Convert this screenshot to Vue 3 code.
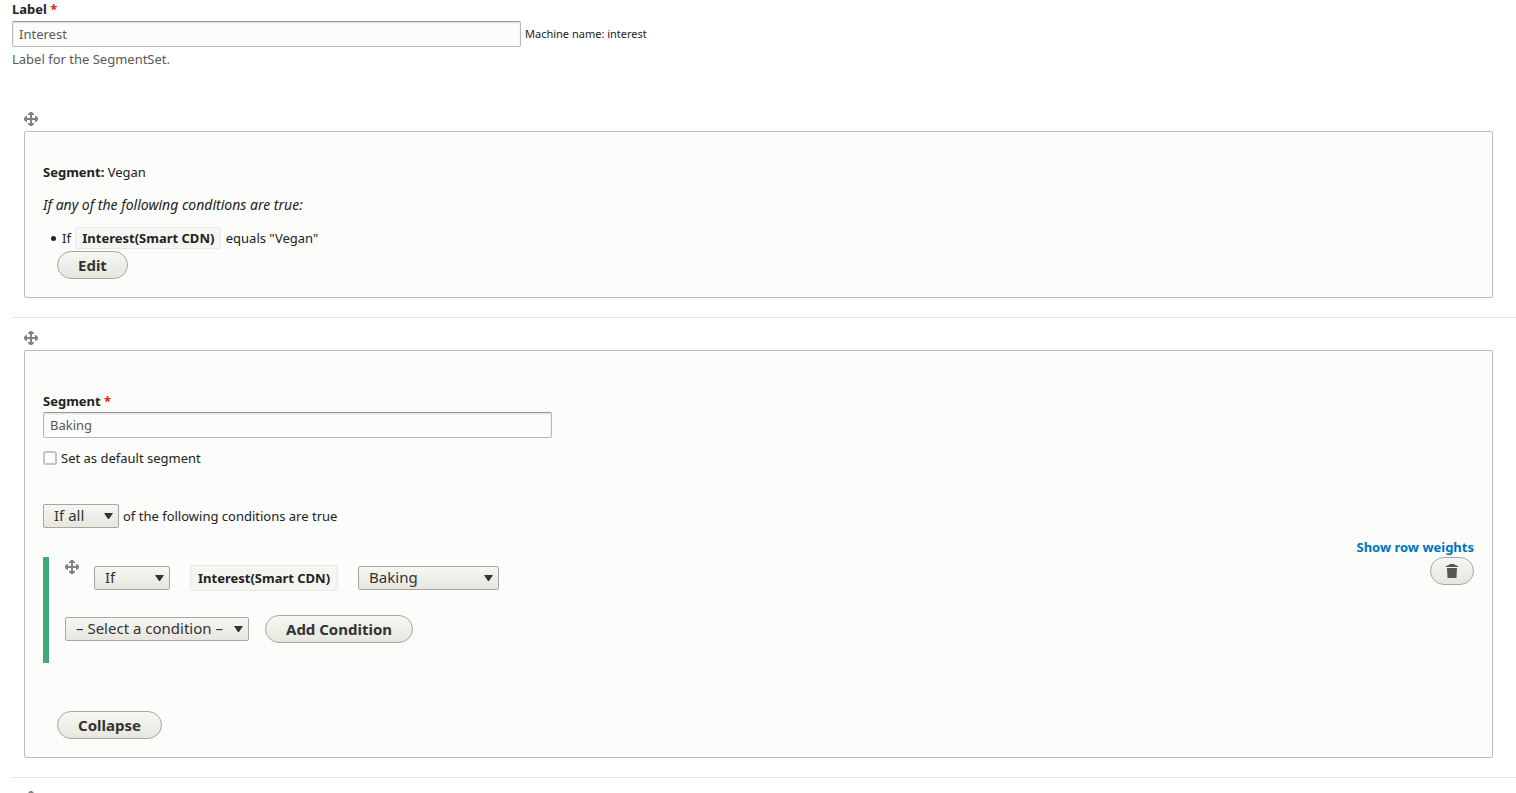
<script setup>
import { ref } from 'vue'

const label = ref('Interest')
const segmentName = ref('Baking')
const isDefault = ref(false)
const matchMode = ref('all')
const negate = ref('if')
const interest = ref('Baking')
const newCondition = ref('')

const segments = [
  { id: 1, name: 'Vegan', mode: 'view' },
  { id: 2, name: 'Baking', mode: 'edit' },
  { id: 3, name: '', mode: 'empty' }
]
</script>

<template>
  <form class="segment-set" @submit.prevent>
    <div class="form-item">
      <label class="form-label" for="set-label">Label <span class="required">*</span></label>
      <div class="label-row">
        <input id="set-label" v-model="label" class="form-text" type="text">
        <small class="machine-name">Machine name: interest</small>
      </div>
      <div class="description">Label for the SegmentSet.</div>
    </div>

    <div class="segments">
      <section v-for="segment in segments" :key="segment.id" class="segment-row">
        <a href="#" class="handle" aria-label="Drag to re-order" @click.prevent>
          <svg width="14" height="14" viewBox="0 0 14 14">
            <path d="M6 0H8L10 2V3H8V6H11V4H12L14 6V8L12 10H11V8H8V11H10V12L8 14H6L4 12V11H6V8H3V10H2L0 8V6L2 4H3V6H6V3H4V2Z" />
          </svg>
        </a>

        <div v-if="segment.mode === 'view'" class="panel">
          <p><strong>Segment:</strong> {{ segment.name }}</p>
          <p><em>If any of the following conditions are true:</em></p>
          <ul class="summary">
            <li>If <span class="tag">Interest(Smart CDN)</span> equals "{{ segment.name }}"</li>
          </ul>
          <button type="button" class="button">Edit</button>
        </div>

        <div v-else-if="segment.mode === 'edit'" class="panel">
          <div class="segment-name">
            <label class="form-label" for="segment-name">Segment <span class="required">*</span></label>
            <input id="segment-name" v-model="segmentName" class="form-text" type="text">
          </div>
          <div class="checkbox-item">
            <input id="default-segment" v-model="isDefault" type="checkbox">
            <label for="default-segment">Set as default segment</label>
          </div>
          <div class="match">
            <select id="match-mode" v-model="matchMode" class="select short">
              <option value="all">If all</option>
              <option value="any">If any</option>
            </select>
            <label for="match-mode">of the following conditions are true</label>
          </div>
          <div class="weights"><a href="#" @click.prevent>Show row weights</a></div>

          <div class="conditions">
            <div class="condition">
              <a href="#" class="handle" aria-label="Drag to re-order" @click.prevent>
                <svg width="14" height="14" viewBox="0 0 14 14">
                  <path d="M6 0H8L10 2V3H8V6H11V4H12L14 6V8L12 10H11V8H8V11H10V12L8 14H6L4 12V11H6V8H3V10H2L0 8V6L2 4H3V6H6V3H4V2Z" />
                </svg>
              </a>
              <div class="condition-fields">
                <select v-model="negate" class="select short" aria-label="Negate">
                  <option value="if">If</option>
                  <option value="not">If not</option>
                </select>
                <span class="tag large">Interest(Smart CDN)</span>
                <select v-model="interest" class="select medium" aria-label="Interest">
                  <option>Baking</option>
                  <option>Vegan</option>
                </select>
              </div>
              <button type="button" class="button remove" aria-label="Remove condition">
                <svg width="12" height="14" viewBox="0 0 12 14">
                  <path d="M0 3V2L3 1L4 0H8L9 1L12 2V3ZM1 4H11L10.5 14H1.5Z" />
                </svg>
              </button>
            </div>
            <div class="add-condition">
              <select v-model="newCondition" class="select long" aria-label="Condition">
                <option value="">– Select a condition –</option>
                <option value="interest">Interest(Smart CDN)</option>
              </select>
              <button type="button" class="button">Add Condition</button>
            </div>
          </div>
          <button type="button" class="button">Collapse</button>
        </div>
      </section>
    </div>
  </form>
</template>

<style>
body {
  background: #fff;
}
</style>

<style scoped>
* {
  box-sizing: border-box;
}

.segment-set {
  height: 100vh;
  overflow: hidden;
  padding-left: 12px;
  color: #222;
  font-family: "Lucida Grande", "Noto Sans", "Open Sans", sans-serif;
  font-size: 13px;
  line-height: 20px;
}

.form-label {
  display: block;
  font-weight: 700;
}

.required {
  color: #e62600;
}

.form-item .form-label {
  line-height: 19px;
  padding-bottom: 2px;
}

.label-row {
  display: flex;
  align-items: center;
  gap: 4px;
}

.form-text {
  display: block;
  width: 509px;
  max-width: 100%;
  height: 26px;
  padding: 0 6px;
  border: 1px solid #b8b8b8;
  border-top-color: #999;
  border-radius: 2px;
  background: #fcfcfa;
  box-shadow: inset 0 1px 2px rgba(0, 0, 0, 0.12);
  color: #595959;
  font-family: inherit;
  font-size: 13px;
}

.machine-name {
  font-size: 11px;
}

.description {
  margin-top: 2px;
  color: #595959;
}

.segments {
  margin-top: 37px;
}

.segment-row {
  padding: 7px 23px 19px 12px;
  border-bottom: 1px solid #e6e4df;
}

.segment-row:first-child {
  padding-top: 0;
}

.handle {
  display: flex;
  align-items: center;
  width: 14px;
  height: 25px;
}

.handle svg {
  fill: #828282;
}

.panel {
  padding: 30px 18px 18px;
  border: 1px solid #bfbfbf;
  border-radius: 2px;
  background: #fcfcfa;
}

.panel p {
  margin: 0 0 13px;
}

.panel em {
  font-size: 14px;
}

.summary {
  margin: 0 0 3px;
  padding: 0 0 0 8px;
  list-style: none;
}

.summary li::before {
  content: "";
  display: inline-block;
  width: 5px;
  height: 5px;
  margin-right: 6px;
  border-radius: 50%;
  background: #222;
  vertical-align: 2px;
}

.tag {
  display: inline-block;
  margin: -1px 1px;
  padding: 0 6px;
  border: 1px solid #e8e8e5;
  border-radius: 3px;
  background: #f5f5f2;
  font-weight: 700;
}

.tag.large {
  margin: 0;
  padding: 2px 7px;
}

.button {
  display: block;
  height: 28px;
  margin: 0 0 0 14px;
  padding: 0 20px;
  border: 1px solid #a6a6a6;
  border-radius: 14px;
  background: linear-gradient(#f6f6f3, #e7e7df);
  color: #333;
  font-family: inherit;
  font-size: 15px;
  font-weight: 700;
  line-height: 26px;
  cursor: pointer;
}

.segment-name {
  padding-top: 10px;
}

.segment-name .form-label {
  padding-bottom: 1px;
}

.checkbox-item {
  display: flex;
  align-items: center;
  gap: 4px;
  margin-top: 10px;
}

.checkbox-item input {
  width: 14px;
  height: 14px;
  margin: 0;
  border: 2px solid #c4c4c4;
  border-radius: 3px;
  background: #fff;
  appearance: none;
}

.checkbox-item input:checked {
  background: #0074bd;
}

.match {
  display: flex;
  align-items: center;
  gap: 4px;
  margin-top: 36px;
}

.select {
  height: 24px;
  padding: 0 20px 2px 10px;
  border: 1px solid #a6a6a6;
  border-radius: 2px;
  background: url("data:image/svg+xml,%3Csvg xmlns='http://www.w3.org/2000/svg' width='9' height='6'%3E%3Cpath fill='%23333' d='M0 0h9L5 6H4z'/%3E%3C/svg%3E") no-repeat right 5px center, linear-gradient(#f6f6f3, #e7e7df);
  color: #333;
  font-family: inherit;
  font-size: 15px;
  appearance: none;
}

.select.short {
  width: 76px;
}

.select.medium {
  width: 141px;
}

.select.long {
  width: 184px;
}

.weights {
  margin-top: 9px;
  text-align: right;
}

.weights a {
  color: #0074bd;
  font-weight: 700;
  text-decoration: none;
}

.conditions {
  margin-bottom: 48px;
  padding: 0 0 20px 16px;
  border-left: 6px solid #42a877;
}

.condition {
  display: flex;
  align-items: flex-start;
}

.condition .handle {
  height: 20px;
}

.condition-fields {
  display: flex;
  align-items: center;
  flex: 1;
  gap: 20px;
  padding: 8px 0 0 15px;
}

.remove {
  width: 44px;
  padding: 0;
}

.remove svg {
  display: block;
  margin: 0 auto;
  fill: #555;
}

.add-condition {
  display: flex;
  align-items: center;
  gap: 2px;
  margin-top: 24px;
}
</style>
